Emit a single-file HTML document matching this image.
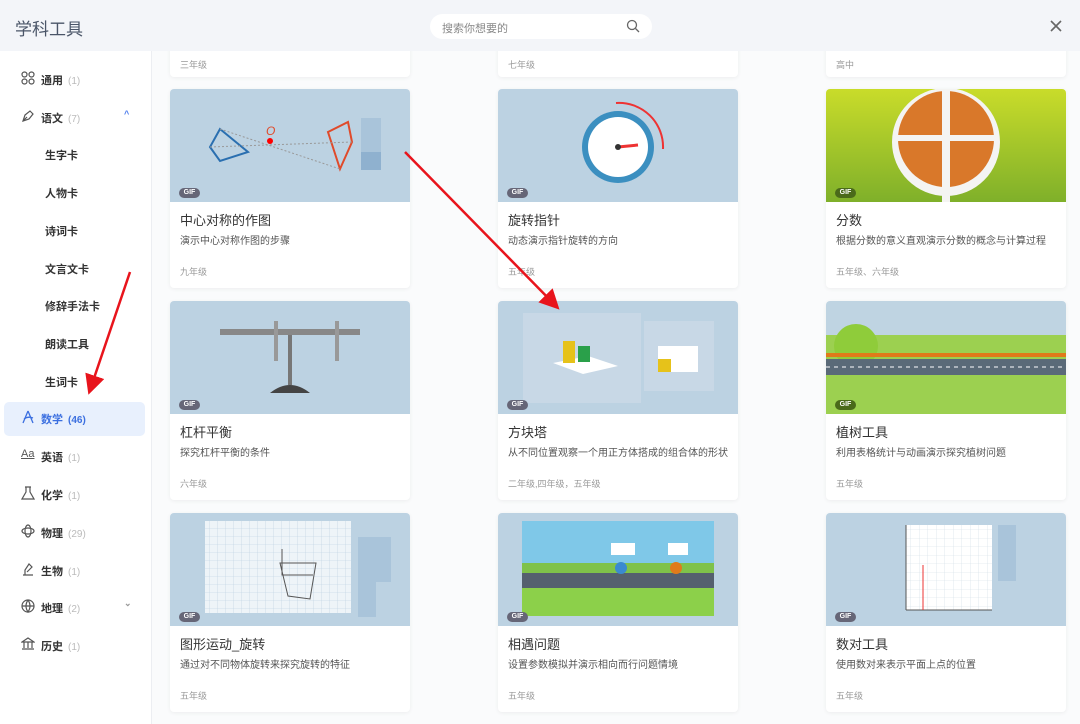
<!DOCTYPE html>
<html><head><meta charset="utf-8"><style>
*{margin:0;padding:0;box-sizing:border-box}
body{width:1080px;height:724px;overflow:hidden;font-family:"Liberation Sans","Noto Sans CJK SC",sans-serif;background:#fafbfc;position:relative}
.hdr{position:absolute;left:0;top:0;width:1080px;height:51px;background:#f3f5f9;z-index:5}
.hdr .t{position:absolute;left:15px;top:15px;font-size:17px;color:#4a5568}
.search{position:absolute;left:430px;top:14px;width:222px;height:25px;background:#fff;border-radius:13px;font-size:11px;color:#888;padding:6px 12px}
.side{position:absolute;left:0;top:51px;width:152px;height:673px;background:#fff;border-right:1px solid #eceef2;z-index:4}
.it{position:absolute;left:0;width:152px;height:20px;font-size:11px;font-weight:bold;color:#333}
.it .ic{position:absolute;left:21px;top:2px;width:14px;height:14px}
.it .l{position:absolute;left:41px;top:3px}
.it .n{color:#bbb;font-weight:normal;margin-left:5px;font-size:10px}
.sub{position:absolute;left:45px;font-size:11px;font-weight:bold;color:#333}
.card{position:absolute;width:240px;height:199px;background:#fff;border-radius:4px;box-shadow:0 1px 4px rgba(0,0,0,.06);overflow:hidden}
.img{position:absolute;left:0;top:0;width:240px;height:113px;background:#bcd2e2;overflow:hidden}
.gif{position:absolute;left:9px;top:99px;width:21px;height:10px;border-radius:5px;background:#667;color:#fff;font-size:7px;font-weight:bold;text-align:center;line-height:10px}
.ti{position:absolute;left:10px;top:121px;font-size:13px;color:#333}
.de{position:absolute;left:10px;top:146px;font-size:10px;color:#555;width:222px;line-height:14px}
.gr{position:absolute;left:10px;top:176px;font-size:9px;color:#999}
</style></head><body>
<div class="hdr"><div class="t">学科工具</div>
<div class="search">搜索你想要的
<svg style="position:absolute;right:12px;top:5px" width="14" height="14" viewBox="0 0 14 14"><circle cx="6" cy="6" r="4.5" fill="none" stroke="#666" stroke-width="1.3"/><path d="M9.5 9.5L13 13" stroke="#666" stroke-width="1.3"/></svg></div>
<svg style="position:absolute;left:1050px;top:20px" width="12" height="12" viewBox="0 0 12 12"><path d="M1 1L11 11M11 1L1 11" stroke="#666" stroke-width="1.6"/></svg>
</div>
<div class="side">
<div class="it" style="top:18px"><svg class="ic" viewBox="0 0 14 14" fill="none" stroke="#555" stroke-width="1.2"><circle cx="3.5" cy="3.5" r="2.5"/><circle cx="10.5" cy="3.5" r="2.5"/><circle cx="3.5" cy="10.5" r="2.5"/><circle cx="10.5" cy="10.5" r="2.5"/></svg><span class="l">通用<span class="n">(1)</span></span></div>
<div class="it" style="top:56px"><svg class="ic" viewBox="0 0 14 14" fill="none" stroke="#555" stroke-width="1.2"><path d="M2 12L4 6L9 2L12 5L8 10Z M2 12L6 8"/></svg><span class="l">语文<span class="n">(7)</span></span><span style="position:absolute;left:124px;top:2px;color:#4b7bec;font-size:9px">^</span></div>
<div class="sub" style="top:96px">生字卡</div>
<div class="sub" style="top:134px">人物卡</div>
<div class="sub" style="top:172px">诗词卡</div>
<div class="sub" style="top:210px">文言文卡</div>
<div class="sub" style="top:247px">修辞手法卡</div>
<div class="sub" style="top:285px">朗读工具</div>
<div class="sub" style="top:323px">生词卡</div>
<div style="position:absolute;left:4px;top:351px;width:141px;height:34px;background:#e8f0fd;border-radius:5px"></div>
<div class="it" style="top:357px;color:#3b6fe0"><svg class="ic" viewBox="0 0 14 14" fill="none" stroke="#3b6fe0" stroke-width="1.3"><path d="M7 1L2 13M7 1L12 13M3 9Q7 6 12 8"/></svg><span class="l">数学<span class="n" style="color:#3b6fe0;font-weight:bold">(46)</span></span></div>
<div class="it" style="top:395px"><span class="ic" style="font-size:11px;font-weight:normal;color:#555;text-decoration:underline">Aa</span><span class="l">英语<span class="n">(1)</span></span></div>
<div class="it" style="top:433px"><svg class="ic" viewBox="0 0 14 14" fill="none" stroke="#555" stroke-width="1.2"><path d="M5 1V6L1 13H13L9 6V1M4 1H10"/></svg><span class="l">化学<span class="n">(1)</span></span></div>
<div class="it" style="top:471px"><svg class="ic" viewBox="0 0 14 14" fill="none" stroke="#555" stroke-width="1.2"><ellipse cx="7" cy="7" rx="6" ry="3"/><ellipse cx="7" cy="7" rx="3" ry="6"/></svg><span class="l">物理<span class="n">(29)</span></span></div>
<div class="it" style="top:509px"><svg class="ic" viewBox="0 0 14 14" fill="none" stroke="#555" stroke-width="1.2"><path d="M2 13H12M4 13V8L8 2L11 5L6 10"/></svg><span class="l">生物<span class="n">(1)</span></span></div>
<div class="it" style="top:546px"><svg class="ic" viewBox="0 0 14 14" fill="none" stroke="#555" stroke-width="1.2"><circle cx="7" cy="7" r="6"/><path d="M1 7H13M7 1Q3 7 7 13Q11 7 7 1"/></svg><span class="l">地理<span class="n">(2)</span></span><span style="position:absolute;left:124px;top:1px;color:#999;font-size:9px">⌄</span></div>
<div class="it" style="top:584px"><svg class="ic" viewBox="0 0 14 14" fill="none" stroke="#555" stroke-width="1.2"><path d="M1 5L7 1L13 5ZM3 5V11M7 5V11M11 5V11M1 12H13"/></svg><span class="l">历史<span class="n">(1)</span></span></div>
</div>

<div class="card" style="left:170px;top:-122px"><div class="gr" style="top:180px">三年级</div></div>
<div class="card" style="left:498px;top:-122px"><div class="gr" style="top:180px">七年级</div></div>
<div class="card" style="left:826px;top:-122px"><div class="gr" style="top:180px">高中</div></div>

<div class="card" style="left:170px;top:89px"><div class="img">
<svg width="240" height="113"><path d="M50 40L40 58L50 72L78 63Z" fill="none" stroke="#2a6fb0" stroke-width="2"/><path d="M158 43L178 33L182 53L170 80Z" fill="none" stroke="#e04a2a" stroke-width="2"/><line x1="50" y1="40" x2="170" y2="80" stroke="#999" stroke-dasharray="2"/><line x1="40" y1="58" x2="182" y2="53" stroke="#999" stroke-dasharray="2"/><circle cx="100" cy="52" r="3" fill="red"/><text x="96" y="46" fill="#e04a2a" font-size="12" font-style="italic">O</text><rect x="191" y="29" width="20" height="52" fill="#a9c4da"/><rect x="191" y="63" width="20" height="18" fill="#8fb1cf"/></svg>
<div class="gif">GIF</div></div><div class="ti">中心对称的作图</div><div class="de">演示中心对称作图的步骤</div><div class="gr">九年级</div></div>

<div class="card" style="left:498px;top:89px"><div class="img">
<svg width="240" height="113"><circle cx="120" cy="58" r="36" fill="#3b8fc0"/><circle cx="120" cy="58" r="30" fill="#fff"/><line x1="120" y1="58" x2="140" y2="56" stroke="#e33" stroke-width="3"/><circle cx="120" cy="58" r="3" fill="#333"/><path d="M118 14A44 44 0 0 1 165 60" fill="none" stroke="#e33" stroke-width="2"/></svg>
<div class="gif">GIF</div></div><div class="ti">旋转指针</div><div class="de">动态演示指针旋转的方向</div><div class="gr">五年级</div></div>

<div class="card" style="left:826px;top:89px"><div class="img" style="background:linear-gradient(#c9dc2a,#7fb02a)">
<svg width="240" height="113"><circle cx="120" cy="53" r="54" fill="#f4f4f2"/><circle cx="120" cy="50" r="48" fill="#d9782a"/><rect x="116" y="0" width="8" height="113" fill="#f4f4f2"/><rect x="70" y="46" width="100" height="6" fill="#f4f4f2"/></svg>
<div class="gif" style="background:#4a6a1a">GIF</div></div><div class="ti">分数</div><div class="de">根据分数的意义直观演示分数的概念与计算过程</div><div class="gr">五年级、六年级</div></div>

<div class="card" style="left:170px;top:301px"><div class="img">
<svg width="240" height="113"><rect x="50" y="28" width="140" height="6" fill="#888"/><rect x="118" y="34" width="4" height="50" fill="#777"/><path d="M100 92Q120 76 140 92Z" fill="#444"/><rect x="104" y="20" width="4" height="40" fill="#999"/><rect x="165" y="20" width="4" height="40" fill="#999"/></svg>
<div class="gif">GIF</div></div><div class="ti">杠杆平衡</div><div class="de">探究杠杆平衡的条件</div><div class="gr">六年级</div></div>

<div class="card" style="left:498px;top:301px"><div class="img">
<svg width="240" height="113"><rect x="25" y="12" width="118" height="90" fill="#c8d8e6"/><rect x="146" y="20" width="70" height="70" fill="#c8d8e6"/><path d="M55 62L90 55L120 65L85 73Z" fill="#fff"/><rect x="65" y="40" width="12" height="22" fill="#e6c21a"/><rect x="80" y="45" width="12" height="16" fill="#2aa04a"/><rect x="160" y="45" width="40" height="26" fill="#fff"/><rect x="160" y="58" width="13" height="13" fill="#e6c21a"/></svg>
<div class="gif">GIF</div></div><div class="ti">方块塔</div><div class="de">从不同位置观察一个用正方体搭成的组合体的形状</div><div class="gr">二年级,四年级，五年级</div></div>

<div class="card" style="left:826px;top:301px"><div class="img" style="background:linear-gradient(#bfd4e2 30%,#9cd050 30%)">
<svg width="240" height="113"><circle cx="30" cy="45" r="22" fill="#8fcc3a"/><rect x="0" y="52" width="240" height="4" fill="#e07a1a"/><rect x="0" y="58" width="240" height="16" fill="#5a6a78"/><line x1="0" y1="66" x2="240" y2="66" stroke="#fff" stroke-dasharray="4"/></svg>
<div class="gif" style="background:#4a6a1a">GIF</div></div><div class="ti">植树工具</div><div class="de">利用表格统计与动画演示探究植树问题</div><div class="gr">五年级</div></div>

<div class="card" style="left:170px;top:513px"><div class="img">
<svg width="240" height="113"><defs><pattern id="g" width="8" height="8" patternUnits="userSpaceOnUse"><path d="M8 0V8H0" fill="none" stroke="#b8cde0" stroke-width=".6"/></pattern></defs><rect x="35" y="8" width="146" height="92" fill="#eef4f8"/><rect x="35" y="8" width="146" height="92" fill="url(#g)"/><path d="M112 36V62H143M110 50H146L140 86L118 83Z" fill="none" stroke="#555"/><rect x="188" y="24" width="18" height="80" fill="#a9c4da"/><rect x="205" y="24" width="16" height="45" fill="#a9c4da"/></svg>
<div class="gif">GIF</div></div><div class="ti">图形运动_旋转</div><div class="de">通过对不同物体旋转来探究旋转的特征</div><div class="gr">五年级</div></div>

<div class="card" style="left:498px;top:513px"><div class="img" style="background:#bcd2e2">
<svg width="240" height="113"><rect x="24" y="8" width="192" height="95" fill="#7fc8e8"/><rect x="24" y="50" width="192" height="10" fill="#7fc24a"/><rect x="24" y="60" width="192" height="15" fill="#55606e"/><rect x="24" y="75" width="192" height="28" fill="#8cd04a"/><rect x="113" y="30" width="24" height="12" fill="#fff"/><rect x="170" y="30" width="20" height="12" fill="#fff"/><circle cx="123" cy="55" r="6" fill="#3a8ad0"/><circle cx="178" cy="55" r="6" fill="#e07a1a"/></svg>
<div class="gif">GIF</div></div><div class="ti">相遇问题</div><div class="de">设置参数模拟并演示相向而行问题情境</div><div class="gr">五年级</div></div>

<div class="card" style="left:826px;top:513px"><div class="img">
<svg width="240" height="113"><defs><pattern id="h" width="8.5" height="8.5" patternUnits="userSpaceOnUse"><path d="M8.5 0V8.5H0" fill="none" stroke="#cfdbe5" stroke-width=".6"/></pattern></defs><rect x="80" y="12" width="86" height="85" fill="#fff"/><rect x="80" y="12" width="86" height="85" fill="url(#h)"/><line x1="80" y1="97" x2="166" y2="97" stroke="#555"/><line x1="80" y1="12" x2="80" y2="97" stroke="#555"/><line x1="97" y1="52" x2="97" y2="97" stroke="#e33"/><rect x="172" y="12" width="18" height="56" fill="#a9c4da"/></svg>
<div class="gif">GIF</div></div><div class="ti">数对工具</div><div class="de">使用数对来表示平面上点的位置</div><div class="gr">五年级</div></div>

<svg style="position:absolute;left:0;top:0;z-index:9" width="1080" height="724">
<defs><marker id="a" markerWidth="8" markerHeight="8" refX="6" refY="4" orient="auto"><path d="M0 0L8 4L0 8Z" fill="#e8141c"/></marker></defs>
<line x1="405" y1="152" x2="556" y2="306" stroke="#e8141c" stroke-width="2.5" marker-end="url(#a)"/>
<line x1="130" y1="272" x2="90" y2="390" stroke="#e8141c" stroke-width="2.5" marker-end="url(#a)"/>
</svg>
</body></html>
